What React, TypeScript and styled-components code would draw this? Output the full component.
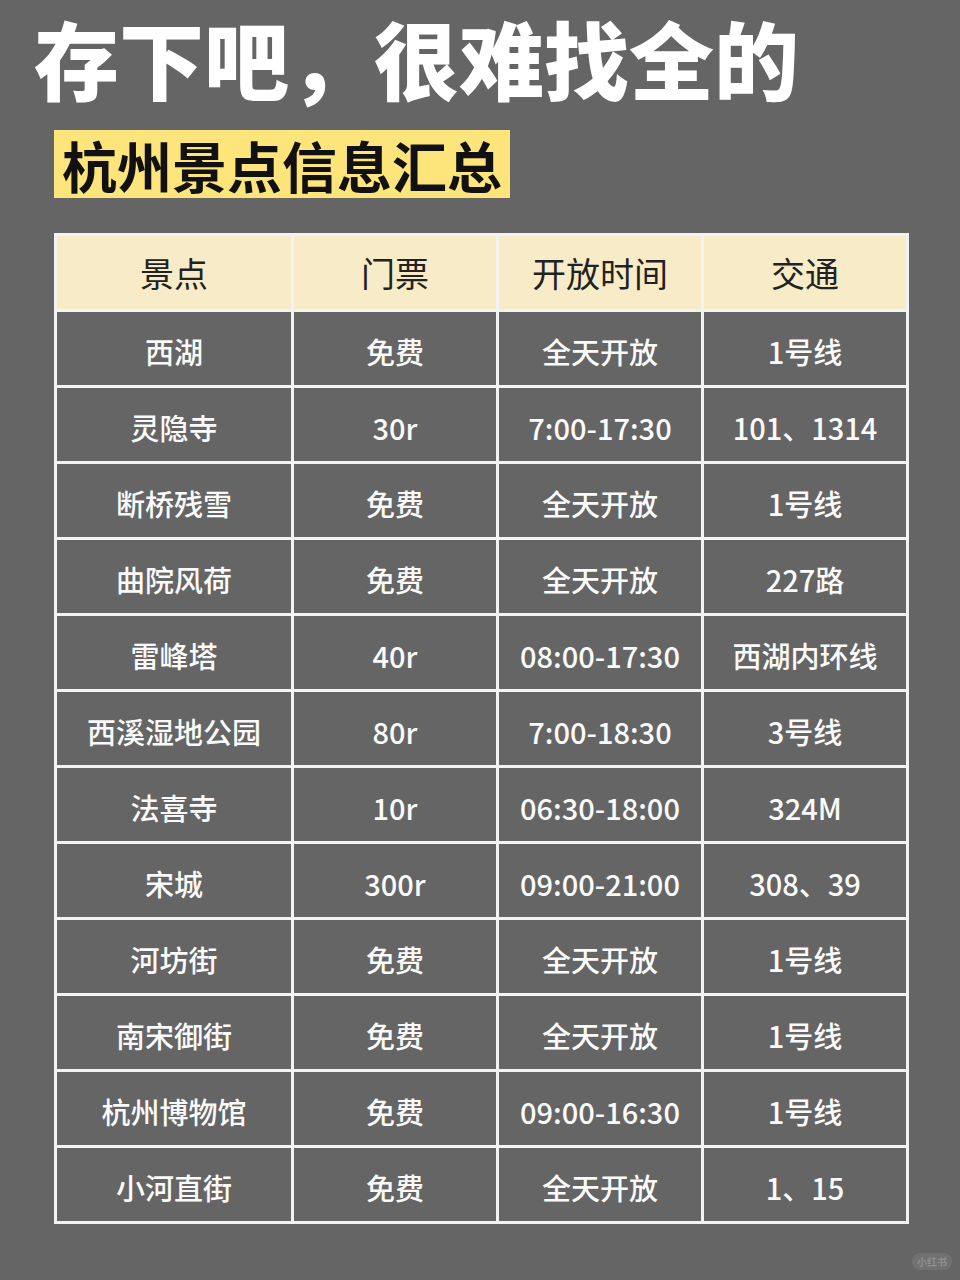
import React from "react";
import styled, { createGlobalStyle } from "styled-components";

const Global = createGlobalStyle`
  html, body { margin: 0; padding: 0; background: #656565; }
  body { font-family: "Noto Sans CJK SC", "Noto Sans", sans-serif; }
`;

const Page = styled.div`
  position: relative;
  width: 960px;
  height: 1280px;
  background: #656565;
  overflow: hidden;
  box-sizing: border-box;
`;

const Header = styled.header`
  display: flex;
  flex-direction: column;
  align-items: flex-start;
  margin-top: -5px;
`;

const Title = styled.h1`
  margin: 0 0 0 34px;
  font-size: 85px;
  line-height: 1.45;
  font-weight: 900;
  color: #ffffff;
  white-space: nowrap;
  letter-spacing: 0;
`;

const Badge = styled.div`
  display: inline-flex;
  align-items: center;
  margin: 12px 0 0 54px;
  height: 68px;
  padding: 0 8px 0 8px;
  background: #fde57b;
  color: #111;
  font-size: 55px;
  font-weight: 700;
  line-height: 68px;
  white-space: nowrap;
  box-sizing: border-box;
`;

const Grid = styled.div`
  display: grid;
  grid-template-columns: 234px 202px 202px 202px;
  grid-auto-rows: 73px;
  gap: 3px;
  padding: 3px;
  width: fit-content;
  margin: 35px 0 0 54px;
  background: #f3f3f3;
`;

const HeadCell = styled.div`
  display: flex;
  align-items: center;
  justify-content: center;
  background: #f7ecc7;
  color: #222;
  font-size: 34px;
  font-weight: 400;
`;

const Cell = styled.div`
  display: flex;
  align-items: center;
  justify-content: center;
  background: #656565;
  color: #fafafa;
  font-size: 29px;
  font-weight: 500;
  padding-top: 4px;
  box-sizing: border-box;
`;

const Watermark = styled.div`
  position: absolute;
  right: 8px;
  bottom: 10px;
  padding: 1px 5px;
  border-radius: 8px;
  background: rgba(255, 255, 255, 0.08);
  color: rgba(255, 255, 255, 0.22);
  font-size: 10px;
  font-weight: 700;
`;

const headers = ["景点", "门票", "开放时间", "交通"];
const rows: string[][] = [
  ["西湖", "免费", "全天开放", "1号线"],
  ["灵隐寺", "30r", "7:00-17:30", "101、1314"],
  ["断桥残雪", "免费", "全天开放", "1号线"],
  ["曲院风荷", "免费", "全天开放", "227路"],
  ["雷峰塔", "40r", "08:00-17:30", "西湖内环线"],
  ["西溪湿地公园", "80r", "7:00-18:30", "3号线"],
  ["法喜寺", "10r", "06:30-18:00", "324M"],
  ["宋城", "300r", "09:00-21:00", "308、39"],
  ["河坊街", "免费", "全天开放", "1号线"],
  ["南宋御街", "免费", "全天开放", "1号线"],
  ["杭州博物馆", "免费", "09:00-16:30", "1号线"],
  ["小河直街", "免费", "全天开放", "1、15"],
];

export default function App() {
  return (
    <>
      <Global />
      <Page>
        <Header>
          <Title>存下吧，很难找全的</Title>
          <Badge>杭州景点信息汇总</Badge>
        </Header>
        <Grid>
          {headers.map((h) => (
            <HeadCell key={h}>{h}</HeadCell>
          ))}
          {rows.map((r, i) =>
            r.map((c, j) => <Cell key={`${i}-${j}`}>{c}</Cell>)
          )}
        </Grid>
        <Watermark>小红书</Watermark>
      </Page>
    </>
  );
}
